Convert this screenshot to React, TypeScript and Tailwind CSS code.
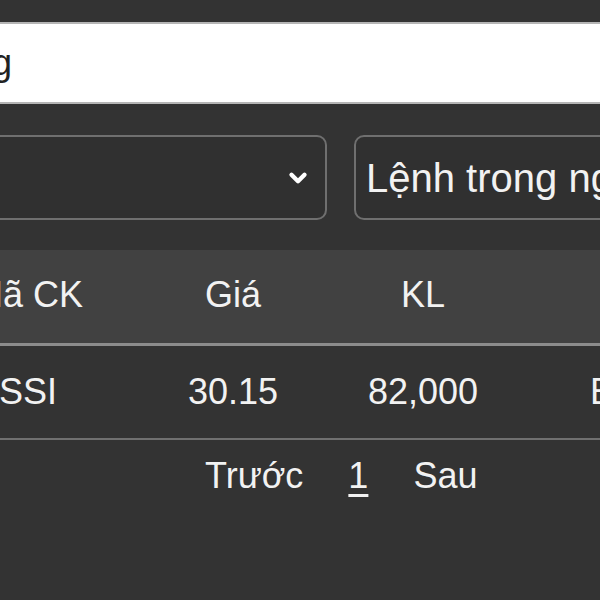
import { ChevronDown } from "lucide-react";

const columns = [
  { key: "symbol", label: "Mã CK", width: "w-[200px]" },
  { key: "price", label: "Giá", width: "w-[210px]" },
  { key: "volume", label: "KL", width: "w-[170px]" },
  { key: "side", label: "Loại", width: "w-[270px]" },
];

const rows = [{ symbol: "SSI", price: "30.15", volume: "82,000", side: "Bán ra" }];

export default function App() {
  return (
    <div
      className="w-[600px] h-[600px] overflow-hidden bg-[#333333] text-[#f2f2f2]"
      style={{ fontFamily: '"Liberation Sans", Arial, sans-serif' }}
    >
      <div className="-ml-[72px] w-[900px] pt-[22px]">
        {/* Ô tìm kiếm */}
        <div className="h-[82px] bg-white border-y-2 border-[#b5b5b5] flex items-center">
          <div className="w-[84px] flex justify-end">
            <span className="whitespace-nowrap text-[36px] text-[#222]">Nhập mã chứng</span>
          </div>
        </div>

        {/* Bộ lọc */}
        <div className="mt-[31px] flex gap-[27px]">
          <div className="w-[399px] shrink-0 h-[85px] rounded-[10px] border-2 border-[#6f6f6f] bg-[#303030] flex items-center justify-end pr-[14px]">
            <ChevronDown className="w-[26px] h-[26px] text-white" strokeWidth={4} />
          </div>
          <div className="w-[400px] shrink-0 h-[85px] rounded-[10px] border-2 border-[#6f6f6f] bg-[#303030] flex items-center pl-[10px]">
            <span className="whitespace-nowrap text-[40px]">Lệnh trong ngày</span>
          </div>
        </div>

        {/* Bảng lệnh */}
        <div className="mt-[30px]">
          <div className="flex h-[96px] bg-[#414141] border-b-[3px] border-[#8c8c8c] items-center">
            {columns.map((c) => (
              <div key={c.key} className={`${c.width} shrink-0 text-center text-[36px] pb-[4px]`}>
                {c.label}
              </div>
            ))}
          </div>
          {rows.map((r) => (
            <div key={r.symbol} className="flex h-[94px] bg-[#333333] border-b-2 border-[#707070] items-center">
              <div className="w-[200px] shrink-0 text-center text-[36px]">{r.symbol}</div>
              <div className="w-[210px] shrink-0 text-center text-[36px]">{r.price}</div>
              <div className="w-[170px] shrink-0 text-center text-[36px]">{r.volume}</div>
              <div className="w-[270px] shrink-0 text-center text-[36px] whitespace-nowrap">{r.side}</div>
            </div>
          ))}
        </div>

        {/* Phân trang */}
        <div className="h-[72px] flex items-center pl-[277px] gap-[45px] text-[36px]">
          <span>Trước</span>
          <span className="underline decoration-[3px] underline-offset-[6px]">1</span>
          <span>Sau</span>
        </div>
      </div>
    </div>
  );
}
